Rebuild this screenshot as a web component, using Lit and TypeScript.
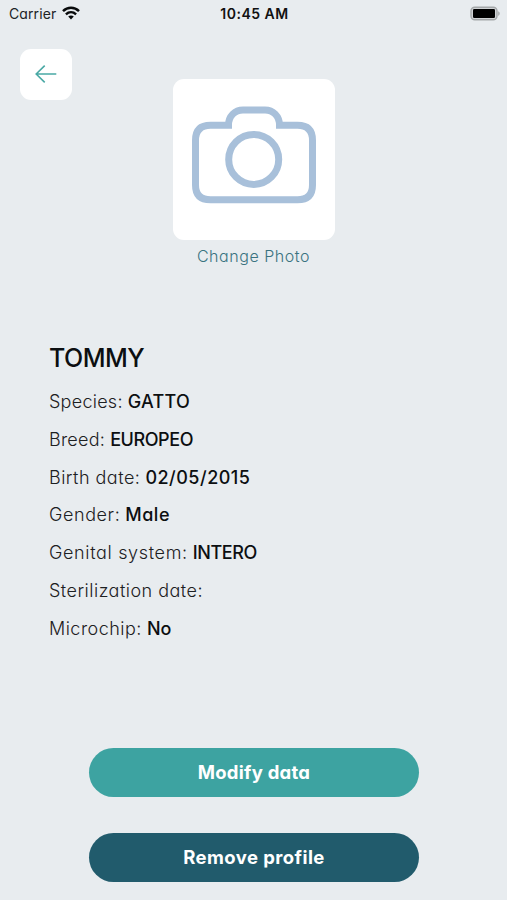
import { LitElement, html, css } from "lit";
import { customElement } from "lit/decorators.js";

interface Field {
  key: string;
  label: string;
  value: string;
}

const FIELDS: Field[] = [
  { key: "species", label: "Species:", value: "GATTO" },
  { key: "breed", label: "Breed:", value: "EUROPEO" },
  { key: "birth", label: "Birth date:", value: "02/05/2015" },
  { key: "gender", label: "Gender:", value: "Male" },
  { key: "genital", label: "Genital system:", value: "INTERO" },
  { key: "steril", label: "Sterilization date:", value: "" },
  { key: "chip", label: "Microchip:", value: "No" },
];

@customElement("status-bar")
export class StatusBar extends LitElement {
  static styles = css`
    :host {
      display: grid;
      grid-template-columns: 1fr auto 1fr;
      align-items: center;
      height: 26px;
      padding: 0 7px 0 9px;
      font-size: 14px;
      color: #202326;
    }
    .left { display: flex; align-items: center; gap: 6px; }
    .carrier { letter-spacing: 0.1px; }
    .time { font-weight: 600; letter-spacing: 0.5px; color: #111; }
    .right { display: flex; justify-content: flex-end; }
    svg { display: block; }
  `;
  render() {
    return html`
      <div class="left">
        <span class="carrier">Carrier</span>
        <svg width="18" height="14" viewBox="0 0 18 14" fill="none" stroke="#080a0b">
          <path d="M1 5.2C5.6.7 12.4.7 17 5.2" stroke-width="2.5" />
          <path d="M3.9 8.3c3-2.8 7.2-2.8 10.2 0" stroke-width="2.4" />
          <path d="M9 13.4 6.2 10.6c1.6-1.4 4-1.4 5.6 0Z" fill="#080a0b" stroke="none" />
        </svg>
      </div>
      <span class="time">10:45 AM</span>
      <div class="right">
        <svg width="31" height="15" viewBox="0 0 31 15">
          <rect x="2" y="1.2" width="26" height="12.6" rx="3.8" fill="#d0d3d5" stroke="#a4a7a9" stroke-width="1.4" />
          <rect x="4" y="3.1" width="22" height="8.8" rx="1.2" fill="#000" />
          <path d="M29.2 5.2c2 .8 2 3.8 0 4.6Z" fill="#a4a7a9" />
        </svg>
      </div>
    `;
  }
}

@customElement("app-root")
export class AppRoot extends LitElement {
  static styles = css`
    :host {
      display: flex;
      flex-direction: column;
      box-sizing: border-box;
      width: 100%;
      height: 900px;
      overflow: hidden;
      background: #e8ecef;
      font-family: Inter, "Open Sans", sans-serif;
      font-feature-settings: "cv11";
      color: #0c0f11;
    }
    button { font: inherit; font-feature-settings: inherit; border: 0; padding: 0; }
    svg { display: block; }
    .top {
      display: grid;
      grid-template-columns: 1fr 162px 1fr;
      align-items: start;
      padding: 23px 0 0 0;
    }
    .back {
      display: flex;
      align-items: center;
      justify-content: center;
      width: 52px;
      height: 51px;
      margin-left: 20px;
      border-radius: 11px;
      background: #fff;
    }
    .photo {
      display: flex;
      flex-direction: column;
      align-items: center;
      padding-top: 30px;
    }
    .frame {
      width: 162px;
      height: 161px;
      border-radius: 11px;
      background: #fff;
    }
    .change {
      margin-top: 5px;
      font-size: 16px;
      line-height: 22px;
      font-weight: 300;
      letter-spacing: 0.55px;
      white-space: nowrap;
      color: #3a7380;
    }
    .info { padding: 74px 49px 0; }
    .name {
      margin: 0 0 7.6px;
      font-size: 25px;
      line-height: 34px;
      font-weight: 500;
      letter-spacing: -0.5px;
    }
    .field {
      display: flex;
      align-items: center;
      gap: 5px;
      height: 37.8px;
      font-size: 18px;
      white-space: nowrap;
    }
    .label { font-weight: 300; color: #1c2022; letter-spacing: 0.48px; }
    .value { font-weight: 500; }
    .species .label, .breed .label { letter-spacing: 0.25px; }
    .gender .label { letter-spacing: 0.58px; }
    .genital .label { letter-spacing: 0.65px; }
    .species .value { letter-spacing: 0.3px; }
    .breed .value, .genital .value { letter-spacing: -0.42px; }
    .birth .value, .gender .value { letter-spacing: 0.5px; }
    .actions {
      display: flex;
      flex-direction: column;
      gap: 36px;
      margin: auto 88px 18px 89px;
    }
    .action {
      height: 49px;
      padding-bottom: 2px;
      border-radius: 25px;
      color: #fff;
      font-size: 18.5px;
      font-weight: 700;
    }
    .modify { background: #3da3a1; letter-spacing: 0.25px; }
    .remove { background: #215b6c; letter-spacing: 0.42px; }
  `;

  render() {
    return html`
      <status-bar></status-bar>
      <div class="top">
        <button class="back" aria-label="Back">
          <svg width="24" height="21" viewBox="0 0 24 21" fill="none" stroke="#4aa9a5" stroke-width="1.6">
            <path d="M22.3 10H2.2M10.7 1.6 2.2 10l8.5 8.4" />
          </svg>
        </button>
        <div class="photo">
          <div class="frame">
            <svg width="162" height="161" viewBox="0 0 162 161" fill="none" stroke="#a8c0da" stroke-width="7">
              <path d="M37.5 46.2H55.5C55.5 37 62 31 70 31H92C100 31 106.5 37 106.5 46.2H124.5Q139.5 46.2 139.5 61.2V106Q139.5 120.8 124.5 120.8H37.5Q22.5 120.8 22.5 106V61.2Q22.5 46.2 37.5 46.2Z" />
              <circle cx="80.7" cy="80.4" r="25" />
            </svg>
          </div>
          <span class="change">Change Photo</span>
        </div>
      </div>
      <section class="info">
        <h1 class="name">TOMMY</h1>
        ${FIELDS.map(
          (f) => html`<div class="field ${f.key}">
            <span class="label">${f.label}</span><span class="value">${f.value}</span>
          </div>`
        )}
      </section>
      <div class="actions">
        <button class="action modify">Modify data</button>
        <button class="action remove">Remove profile</button>
      </div>
    `;
  }
}
